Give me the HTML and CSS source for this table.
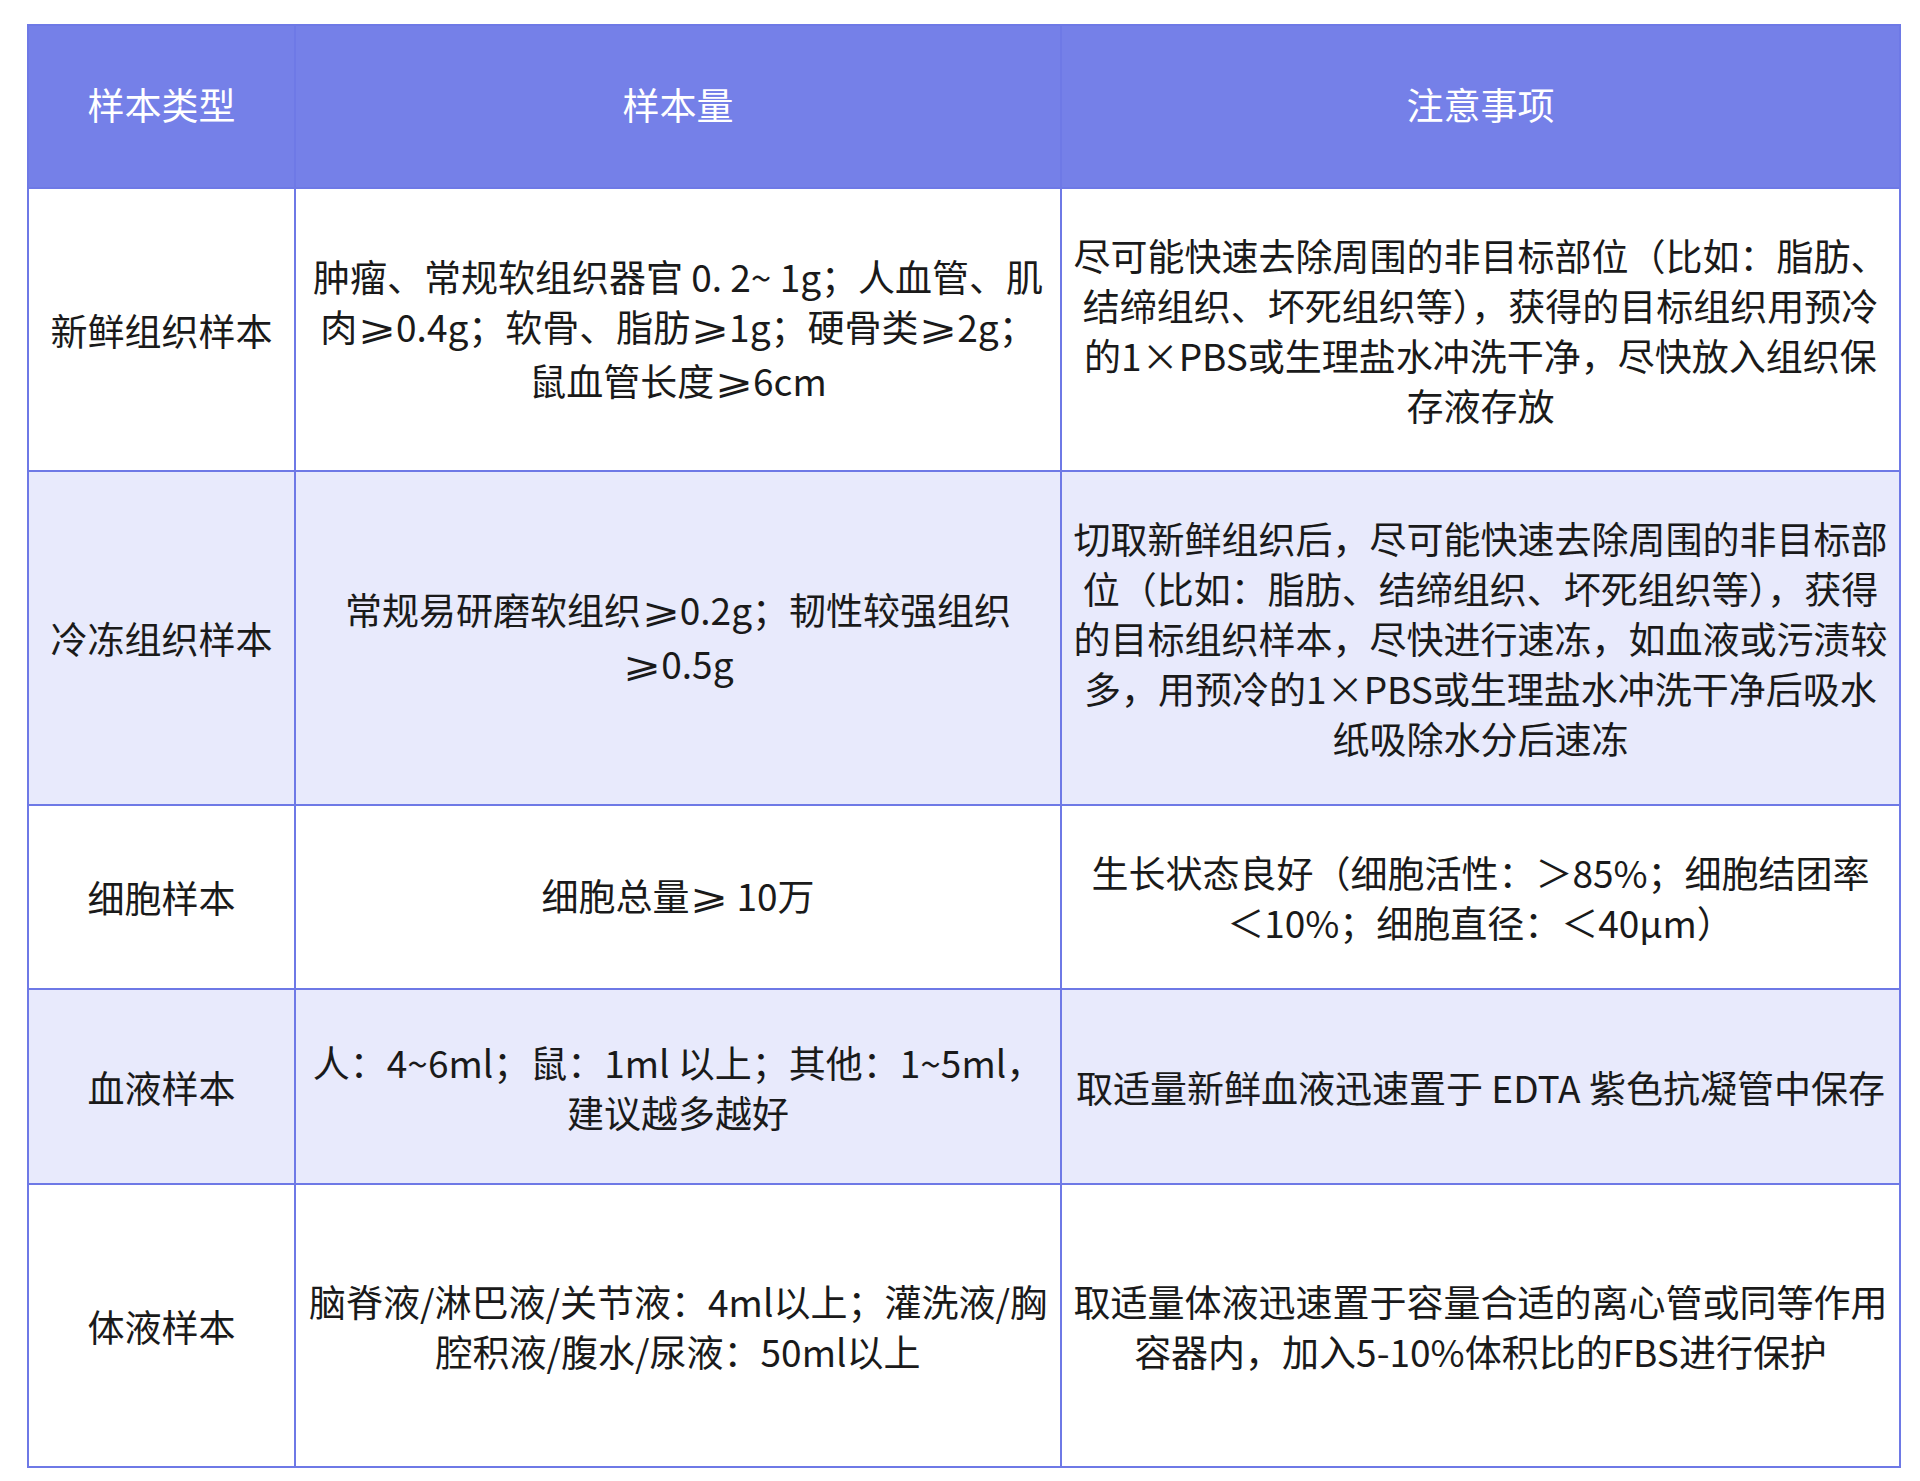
FILE: index.html
```html
<!DOCTYPE html>
<html lang="zh-CN">
<head>
<meta charset="utf-8">
<title>样本要求</title>
<link rel="stylesheet" href="styles.css">
</head>
<body>
<table class="sample-table">
  <colgroup>
    <col class="c-type">
    <col class="c-amount">
    <col class="c-notes">
  </colgroup>
  <thead>
    <tr class="row-head">
      <th>样本类型</th>
      <th>样本量</th>
      <th>注意事项</th>
    </tr>
  </thead>
  <tbody>
    <tr class="row-1">
      <td>新鲜组织样本</td>
      <td>肿瘤、常规软组织器官 0. 2~ 1g；人血管、肌<br>肉<span class="ge">⩾</span>0.4g；软骨、脂肪<span class="ge">⩾</span>1g；硬骨类<span class="ge">⩾</span>2g；<br>鼠血管长度<span class="ge">⩾</span>6cm</td>
      <td>尽可能快速去除周围的非目标部位（比如：脂肪、<br>结缔组织、坏死组织等），获得的目标组织用预冷<br>的1×PBS或生理盐水冲洗干净，尽快放入组织保<br>存液存放</td>
    </tr>
    <tr class="row-2 alt">
      <td>冷冻组织样本</td>
      <td>常规易研磨软组织<span class="ge">⩾</span>0.2g；韧性较强组织<br><span class="ge">⩾</span>0.5g</td>
      <td>切取新鲜组织后，尽可能快速去除周围的非目标部<br>位（比如：脂肪、结缔组织、坏死组织等），获得<br>的目标组织样本，尽快进行速冻，如血液或污渍较<br>多，用预冷的1×PBS或生理盐水冲洗干净后吸水<br>纸吸除水分后速冻</td>
    </tr>
    <tr class="row-3">
      <td>细胞样本</td>
      <td>细胞总量<span class="ge">⩾</span> 10万</td>
      <td>生长状态良好（细胞活性：＞85%；细胞结团率<br>＜10%；细胞直径：＜40μm）</td>
    </tr>
    <tr class="row-4 alt">
      <td>血液样本</td>
      <td>人：4~6ml；鼠：1ml 以上；其他：1~5ml，<br>建议越多越好</td>
      <td>取适量新鲜血液迅速置于 EDTA 紫色抗凝管中保存</td>
    </tr>
    <tr class="row-5">
      <td>体液样本</td>
      <td>脑脊液/淋巴液/关节液：4ml以上；灌洗液/胸<br>腔积液/腹水/尿液：50ml以上</td>
      <td>取适量体液迅速置于容量合适的离心管或同等作用<br>容器内，加入5-10%体积比的FBS进行保护</td>
    </tr>
  </tbody>
</table>
</body>
</html>
```

FILE: styles.css
```css
html, body {
  margin: 0;
  padding: 0;
  background: #ffffff;
}

body {
  padding: 24px 0 0 27px;
  font-family: "Noto Sans CJK SC", "Noto Sans", "DejaVu Sans", sans-serif;
  color: #1a1a1a;
}

.sample-table {
  width: 1872px;
  border-collapse: collapse;
  table-layout: fixed;
  border: 2px solid #6e79e6;
}

.c-type { width: 267px; }
.c-amount { width: 766px; }
.c-notes { width: 839px; }

.sample-table th,
.sample-table td {
  border: 2px solid #6e79e6;
  text-align: center;
  vertical-align: middle;
  font-size: 37px;
  line-height: 50px;
  padding: 0 4px;
  white-space: nowrap;
  overflow: hidden;
}

.sample-table th {
  background: #7580e8;
  color: #ffffff;
  font-weight: 400;
  padding-bottom: 5px;
}

.row-head { height: 163px; }
.row-1 { height: 283px; }
.row-2 { height: 334px; }
.row-3 { height: 184px; }
.row-4 { height: 195px; }
.row-5 { height: 283px; }

.alt td {
  background: #e8eafc;
}

.ge {
  display: inline-block;
  font-family: "DejaVu Sans", sans-serif;
  font-weight: 200;
  font-size: 0.95em;
  transform: scaleX(1.3) translateY(-2px);
  margin: 0 0.14em;
}
```
